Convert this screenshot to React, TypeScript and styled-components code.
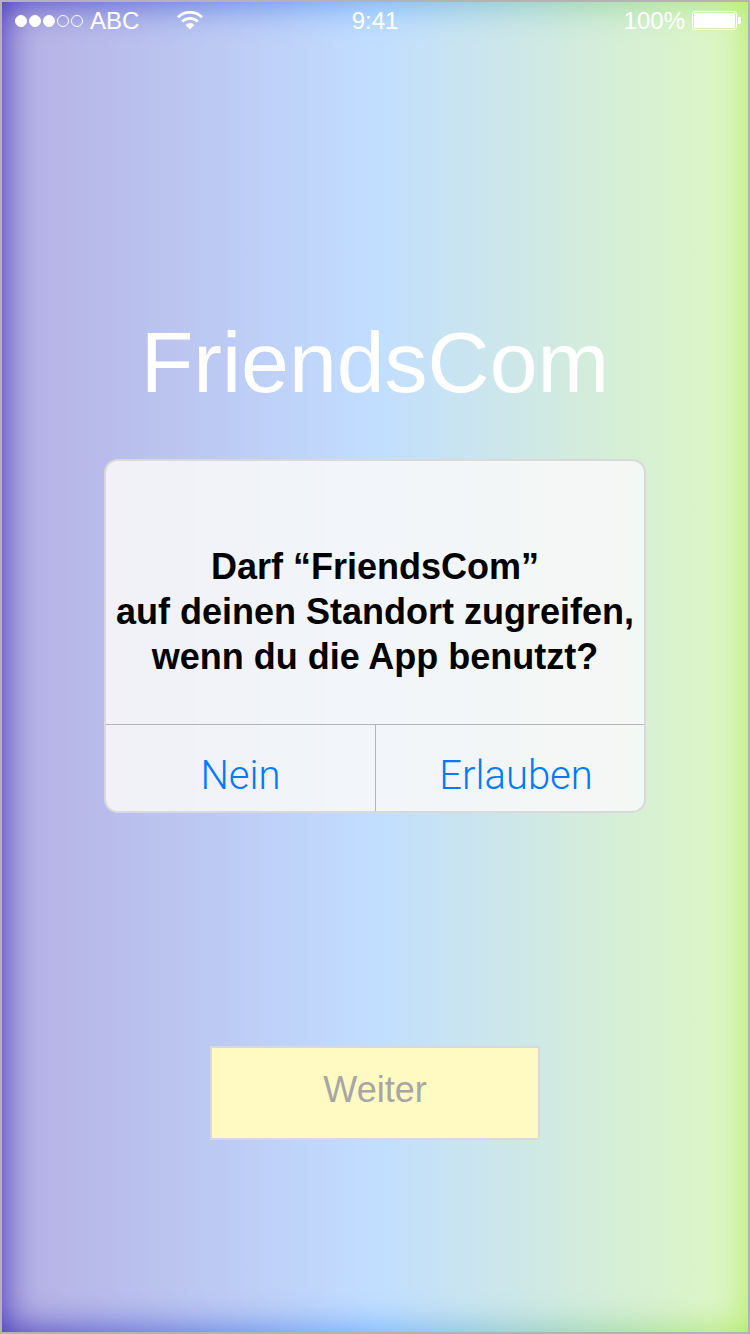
import React from "react";
import styled, { createGlobalStyle } from "styled-components";

const GlobalStyle = createGlobalStyle`
  *, *::before, *::after { box-sizing: border-box; }
  body {
    margin: 0;
    font-family: "Liberation Sans", Arial, Helvetica, sans-serif;
  }
`;

const Screen = styled.div`
  position: relative;
  isolation: isolate;
  overflow: hidden;
  display: flex;
  flex-direction: column;
  min-height: 100vh;
  border: 2px solid #b3b3b3;
  background: linear-gradient(to right, #4838b8, #66acff 50%, #b2ec66);

  /* Soft white veil that leaves the edges saturated */
  &::before {
    content: "";
    position: absolute;
    z-index: -1;
    inset: 2px;
    background: rgba(255, 255, 255, 0.6);
    filter: blur(18px);
  }
`;

const StatusBar = styled.header`
  display: grid;
  grid-template-columns: 1fr auto 1fr;
  align-items: center;
  height: 38px;
  padding: 0 7px;
  color: #fff;
  font-size: 24px;
  line-height: 38px;
`;

const StatusGroup = styled.div<{ $end?: boolean }>`
  display: flex;
  align-items: center;
  justify-content: ${(p) => (p.$end ? "flex-end" : "flex-start")};
  gap: 7px;
  padding-left: 6px;
`;

const Signal = styled.span`
  display: flex;
  gap: 2px;
`;

const Dot = styled.span<{ $on: boolean }>`
  width: 12px;
  height: 12px;
  border: 1px solid #fff;
  border-radius: 50%;
  background: ${(p) => (p.$on ? "#fff" : "transparent")};
`;

const WifiIcon = styled.svg`
  display: block;
  margin-left: 31px;
`;

const Main = styled.main`
  flex: 1;
  display: flex;
  flex-direction: column;
  align-items: center;
  padding: 272px 16px 0;
`;

const Title = styled.h1`
  margin: 0;
  color: #fff;
  font-size: 86px;
  font-weight: 400;
  line-height: 100px;
`;

const Alert = styled.section`
  width: 100%;
  max-width: 542px;
  margin-top: 47px;
  border: 2px solid #d9d9d9;
  border-radius: 14px;
  background: rgba(248, 248, 248, 0.88);
`;

const Message = styled.h2`
  margin: 0;
  padding: 83px 0 45px;
  color: #000;
  font-size: 36px;
  font-weight: 700;
  line-height: 45px;
  text-align: center;
`;

const Actions = styled.div`
  display: grid;
  grid-template-columns: 1fr 1fr;
  border-top: 1px solid #b2b6ba;
`;

const Action = styled.button<{ $divided?: boolean }>`
  height: 86px;
  border: 0;
  border-left: ${(p) => (p.$divided ? "1px solid #b2b6ba" : "0")};
  padding: 16px 0 0 ${(p) => (p.$divided ? "12px" : "0")};
  background: transparent;
  color: #007aff;
  font-family: Roboto, "Liberation Sans", sans-serif;
  font-size: 40px;
  font-weight: 300;
  line-height: 48px;
`;

const NextButton = styled.button`
  width: 330px;
  height: 94px;
  margin-top: 233px;
  border: 2px solid #d9d9d9;
  padding: 0 0 6px;
  background: #fff9c2;
  color: #a6a6a6;
  font-family: inherit;
  font-size: 36px;
  line-height: 44px;
`;

export default function App() {
  return (
    <>
      <GlobalStyle />
      <Screen>
        <StatusBar>
          <StatusGroup>
            <Signal>
              {[true, true, true, false, false].map((on, i) => (
                <Dot key={i} $on={on} />
              ))}
            </Signal>
            <span>ABC</span>
            <WifiIcon width="26" height="20" viewBox="0 0 26 20" aria-hidden="true">
              <g fill="none" stroke="#fff" strokeWidth="2.8">
                <path d="M1 6.2A17.2 17.2 0 0 1 25 6.2" />
                <path d="M5.2 10.6A11.2 11.2 0 0 1 20.8 10.6" />
              </g>
              <path fill="#fff" d="M8.6 13.9A6.2 6.2 0 0 1 17.4 13.9L13 18.4Z" />
            </WifiIcon>
          </StatusGroup>
          <span>9:41</span>
          <StatusGroup $end>
            <span>100%</span>
            <svg width="49" height="20" viewBox="0 0 49 20" aria-hidden="true">
              <rect x="0.5" y="0.5" width="44" height="18" rx="2.5" fill="none" stroke="#fff" />
              <rect x="2" y="2" width="41" height="15" rx="1" fill="#fff" />
              <path fill="#fff" d="M46 6h1.5a1.5 1.5 0 0 1 1.5 1.5v4a1.5 1.5 0 0 1-1.5 1.5H46z" />
            </svg>
          </StatusGroup>
        </StatusBar>
        <Main>
          <Title>FriendsCom</Title>
          <Alert role="alertdialog" aria-labelledby="alert-message">
            <Message id="alert-message">
              Darf “FriendsCom”
              <br />
              auf deinen Standort zugreifen,
              <br />
              wenn du die App benutzt?
            </Message>
            <Actions>
              <Action type="button">Nein</Action>
              <Action type="button" $divided>
                Erlauben
              </Action>
            </Actions>
          </Alert>
          <NextButton type="button">Weiter</NextButton>
        </Main>
      </Screen>
    </>
  );
}
